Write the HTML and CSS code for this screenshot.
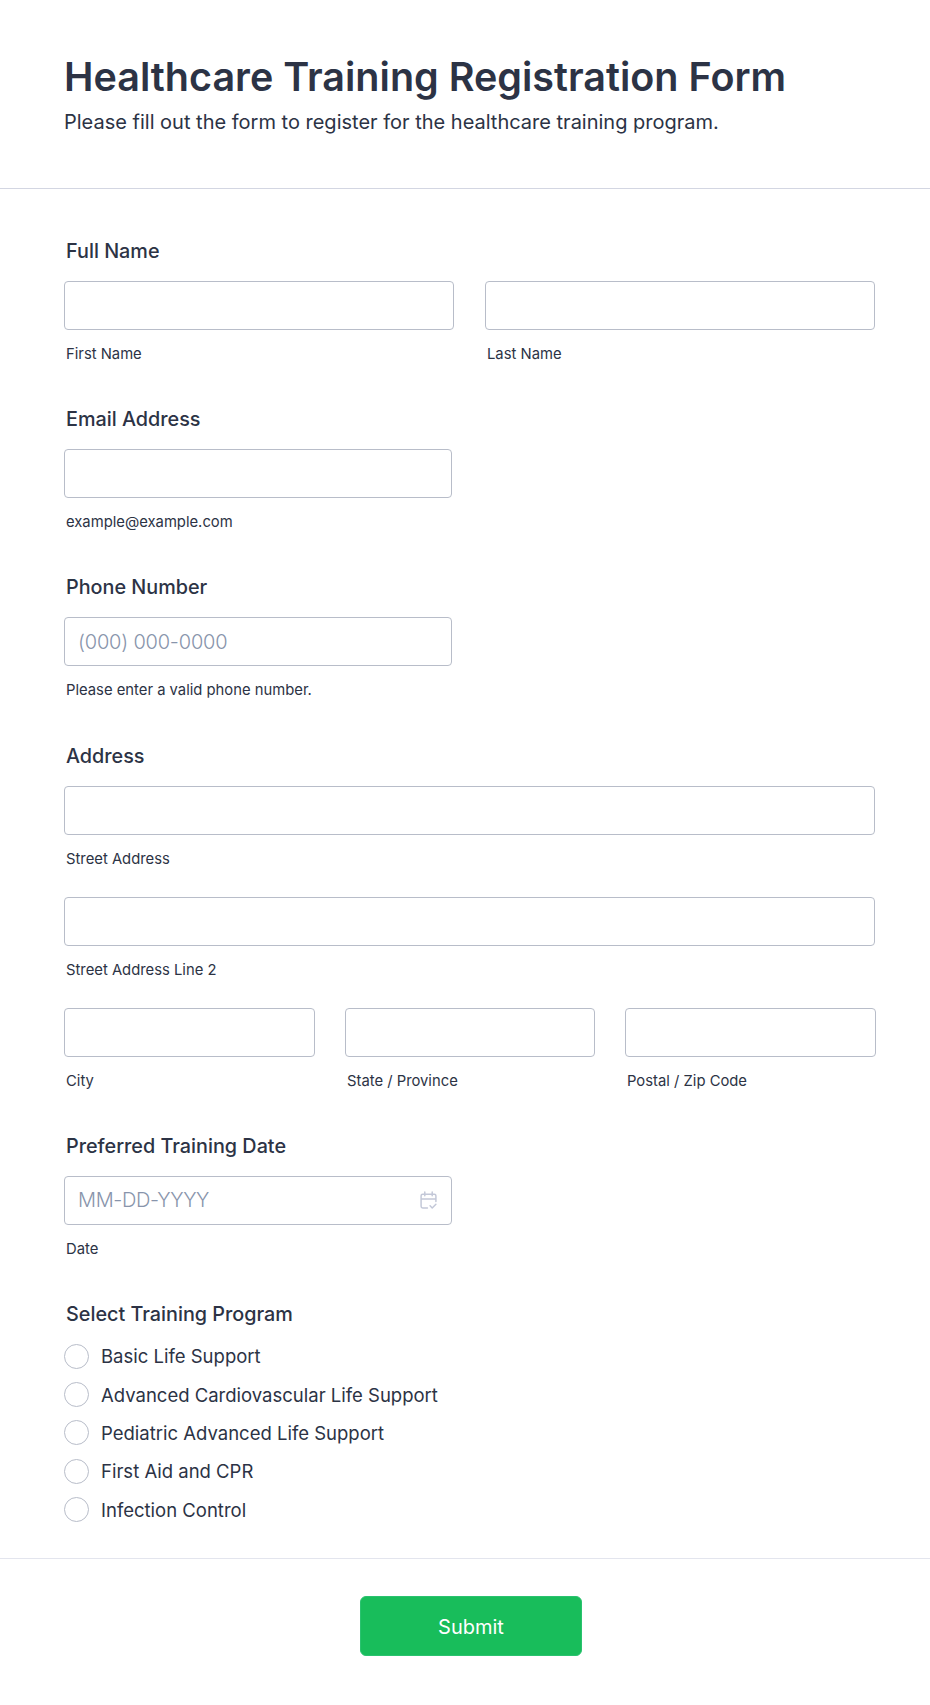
FILE: index.html
```html
<!DOCTYPE html>
<html lang="en">
<head>
<meta charset="utf-8">
<title>Healthcare Training Registration Form</title>
<link rel="stylesheet" href="styles.css">
</head>
<body>
<form class="form">
  <header class="head">
    <h1 class="title">Healthcare Training Registration Form</h1>
    <p class="subtitle">Please fill out the form to register for the healthcare training program.</p>
  </header>
  <div class="fields">
    <section class="field">
      <div class="label">Full Name</div>
      <div class="cols cols-2">
        <div class="unit"><div class="box"></div><div class="hint">First Name</div></div>
        <div class="unit"><div class="box"></div><div class="hint">Last Name</div></div>
      </div>
    </section>
    <section class="field">
      <div class="label">Email Address</div>
      <div class="unit half"><div class="box"></div><div class="hint">example@example.com</div></div>
    </section>
    <section class="field">
      <div class="label">Phone Number</div>
      <div class="unit half"><div class="box"><span class="placeholder">(000) 000-0000</span></div><div class="hint">Please enter a valid phone number.</div></div>
    </section>
    <section class="field">
      <div class="label">Address</div>
      <div class="stack">
        <div class="unit"><div class="box"></div><div class="hint">Street Address</div></div>
        <div class="unit"><div class="box"></div><div class="hint">Street Address Line 2</div></div>
        <div class="cols cols-3">
          <div class="unit"><div class="box"></div><div class="hint">City</div></div>
          <div class="unit"><div class="box"></div><div class="hint">State / Province</div></div>
          <div class="unit"><div class="box"></div><div class="hint">Postal / Zip Code</div></div>
        </div>
      </div>
    </section>
    <section class="field">
      <div class="label">Preferred Training Date</div>
      <div class="unit half">
        <div class="box box-date"><span class="placeholder placeholder-date">MM-DD-YYYY</span>
          <svg class="cal" width="17" height="18" viewBox="1 0 16 17" fill="none" stroke="#c3c8d8" stroke-width="1.4" stroke-linecap="round" stroke-linejoin="round"><path d="M8 16H3.5A1.5 1.5 0 0 1 2 14.5V4.5A1.5 1.5 0 0 1 3.5 3h11A1.5 1.5 0 0 1 16 4.5V10M2 7.5h14M5.5 1v3.5M12.5 1v3.5M10.5 14l2 2 3.5-3.5"/></svg>
        </div>
        <div class="hint">Date</div>
      </div>
    </section>
    <section class="field field-last">
      <div class="label label-radio">Select Training Program</div>
      <ul class="options">
        <li class="option"><span class="radio"></span>Basic Life Support</li>
        <li class="option"><span class="radio"></span>Advanced Cardiovascular Life Support</li>
        <li class="option"><span class="radio"></span>Pediatric Advanced Life Support</li>
        <li class="option"><span class="radio"></span>First Aid and CPR</li>
        <li class="option"><span class="radio"></span>Infection Control</li>
      </ul>
    </section>
  </div>
  <footer class="foot"><button class="submit" type="button">Submit</button></footer>
</form>
</body>
</html>
```

FILE: styles.css
```css
* { box-sizing: border-box; }
html, body { margin: 0; padding: 0; background: #fff; }
body { font-family: Inter, "Liberation Sans", sans-serif; color: #2c3345; }
.form { width: 930px; height: 1705px; }
.head { height: 189px; padding: 52px 64px 0; border-bottom: 1px solid #d3d6e2; }
.title { margin: 0; font-size: 39.5px; line-height: 50px; font-weight: 600; }
.subtitle { margin: 7px 0 0; font-size: 20px; line-height: 27px; font-weight: 400; }
.fields { padding: 50px 55px 0 64px; }
.field { margin-bottom: 44.2px; }
.field-last { margin-bottom: 0; }
.label { padding-left: 2px; font-size: 19.8px; line-height: 25px; font-weight: 500; margin-bottom: 17px; }
.label-radio { margin-top: 1px; margin-bottom: 10px; }
.cols { display: grid; }
.cols-2 { grid-template-columns: 390px 390px; column-gap: 31px; }
.cols-3 { grid-template-columns: 251px 250px 251px; column-gap: 30px; }
.stack { display: flex; flex-direction: column; gap: 29px; }
.half { width: 388px; }
.box { height: 49px; border: 1px solid #b8bdc9; border-radius: 4px; background: #fff; display: flex; align-items: center; padding: 0 13px; }
.box-date { justify-content: space-between; padding-right: 14px; }
.placeholder { font-size: 20px; font-weight: 300; letter-spacing: -0.2px; color: #8894ab; }
.placeholder-date { letter-spacing: -0.35px; }
.cal { display: block; }
.hint { padding-left: 2px; margin-top: 15px; font-size: 14.8px; line-height: 18px; color: #2c3345; }
.options { list-style: none; margin: 0; padding: 0; }
.option { display: flex; align-items: center; height: 38.4px; font-size: 18.5px; }
.radio { width: 25px; height: 25px; border: 1px solid #b8bdc9; border-radius: 50%; margin-right: 12px; flex: none; }
.foot { margin-top: 29.4px; border-top: 1px solid #e3e5ee; display: flex; justify-content: center; padding-top: 37px; padding-left: 12px; }
.submit { width: 222px; height: 60px; padding: 1px 0 0; border: 1px solid #2ac26f; border-radius: 6px; background: #18bd5b; color: #fff; font: 400 20px Inter, "Liberation Sans", sans-serif; }
```
